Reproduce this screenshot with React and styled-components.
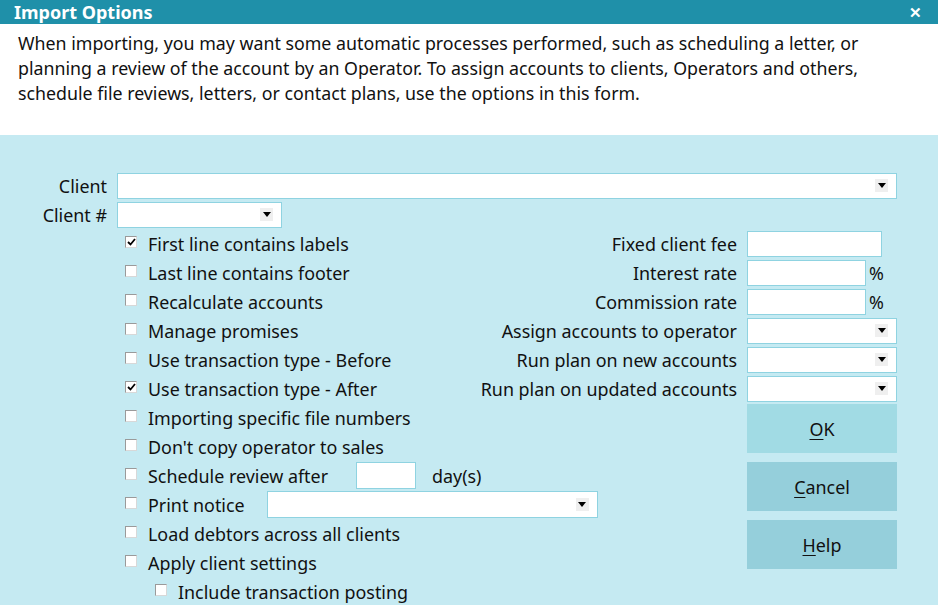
import React from "react";
import styled, { createGlobalStyle } from "styled-components";

const Global = createGlobalStyle`
  html, body { margin: 0; padding: 0; }
  body { background: #c5eaf2; font-family: "Noto Sans", "Open Sans", sans-serif; }
`;

const Window = styled.div`
  width: 938px;
  height: 605px;
  overflow: hidden;
  display: flex;
  flex-direction: column;
  background: #c5eaf2;
  color: #111;
  font-size: 17.9px;
`;

const TitleBar = styled.div`
  height: 24px;
  flex: none;
  background: #1f90a9;
  color: #fff;
  display: flex;
  align-items: center;
  justify-content: space-between;
  padding: 0 14px;
`;

const Title = styled.div`
  font-weight: 700;
  font-size: 18px;
`;

const Close = styled.div`
  font-weight: 700;
  font-size: 15px;
  line-height: 1;
  margin-right: 2px;
`;

const Description = styled.div`
  height: 111px;
  flex: none;
  box-sizing: border-box;
  background: #fff;
  padding: 7px 18px 0;
  font-size: 17.8px;
  line-height: 25px;
  white-space: nowrap;
`;

const Body = styled.div`
  flex: 1;
  padding: 36px 41px 0 0;
  display: flex;
  flex-direction: column;
`;

const ClientGrid = styled.div`
  display: grid;
  grid-template-columns: 107px 1fr;
  grid-auto-rows: 29px;
  column-gap: 10px;
`;

const Label = styled.div`
  display: flex;
  align-items: center;
  justify-content: flex-end;
  white-space: nowrap;
`;

const Select = styled.div`
  box-sizing: border-box;
  height: ${(p) => p.$h || 26}px;
  width: ${(p) => (p.$w ? `${p.$w}px` : "100%")};
  background: #fff;
  border: 1px solid #8fd3e1;
  display: flex;
  align-items: center;
  justify-content: flex-end;
  padding-right: 8px;
  align-self: center;
  flex: none;
`;

const ArrowBox = styled.div`
  width: 13px;
  height: 13px;
  background: #efefef;
  display: flex;
  align-items: center;
  justify-content: center;
`;

const Arrow = () => (
  <ArrowBox>
    <svg width="8" height="5" viewBox="0 0 8 5">
      <path d="M0 0H8L4 5Z" fill="#000" />
    </svg>
  </ArrowBox>
);

const Input = styled.div`
  box-sizing: border-box;
  height: ${(p) => p.$h || 26}px;
  width: ${(p) => p.$w}px;
  background: #fff;
  border: 1px solid #8fd3e1;
  align-self: center;
  flex: none;
`;

const MainGrid = styled.div`
  display: grid;
  grid-template-columns: minmax(0, 1fr) auto 150px;
  grid-auto-rows: 29px;
  column-gap: 10px;
  padding-left: 125px;
`;

const CheckRow = styled.div`
  grid-column: ${(p) => (p.$wide ? "1 / 3" : "1")};
  grid-row: ${(p) => p.$row};
  display: flex;
  align-items: center;
  padding-left: ${(p) => (p.$indent ? 30 : 0)}px;
  white-space: nowrap;
`;

const Box = styled.span`
  box-sizing: border-box;
  width: 12px;
  height: 12px;
  flex: none;
  margin-right: 11px;
  margin-top: -3px;
  background: #fff;
  border: 1px solid #9a9a9a;
  border-right-color: #d8d8d8;
  border-bottom-color: #d8d8d8;
  display: flex;
  align-items: center;
  justify-content: center;
`;

const CheckBox = ({ checked }) => (
  <Box>
    {checked && (
      <svg width="9" height="8" viewBox="0 0 9 8">
        <path d="M1 4L3.5 6.5L8 1" stroke="#000" strokeWidth="1.8" fill="none" />
      </svg>
    )}
  </Box>
);

const Spacer = styled.span`
  width: ${(p) => p.$w}px;
  flex: none;
`;

const RightLabel = styled(Label)`
  grid-column: 2;
  grid-row: ${(p) => p.$row};
`;

const Field = styled.div`
  grid-column: 3;
  grid-row: ${(p) => p.$row};
  display: flex;
  align-items: center;
  gap: 3px;
`;

const Button = styled.div`
  grid-column: 3;
  grid-row: ${(p) => p.$row} / span 2;
  margin-top: 1px;
  height: 49px;
  background: ${(p) => (p.$primary ? "#a1dbe4" : "#95cfdb")};
  display: flex;
  align-items: center;
  justify-content: center;
  u { text-decoration-thickness: 1px; text-underline-offset: 3px; }
`;

const checks = [
  { t: "First line contains labels", c: true },
  { t: "Last line contains footer" },
  { t: "Recalculate accounts" },
  { t: "Manage promises" },
  { t: "Use transaction type - Before" },
  { t: "Use transaction type - After", c: true },
  { t: "Importing specific file numbers" },
  { t: "Don't copy operator to sales" },
];

export default function App() {
  return (
    <>
      <Global />
      <Window>
        <TitleBar>
          <Title>Import Options</Title>
          <Close>✕</Close>
        </TitleBar>
        <Description>
          When importing, you may want some automatic processes performed, such as scheduling a letter, or
          <br />
          planning a review of the account by an Operator. To assign accounts to clients, Operators and others,
          <br />
          schedule file reviews, letters, or contact plans, use the options in this form.
        </Description>
        <Body>
          <ClientGrid>
            <Label>Client</Label>
            <Select>
              <Arrow />
            </Select>
            <Label>Client #</Label>
            <Select $w={165}>
              <Arrow />
            </Select>
          </ClientGrid>
          <MainGrid>
            {checks.map((c, i) => (
              <CheckRow key={c.t} $row={i + 1}>
                <CheckBox checked={c.c} />
                {c.t}
              </CheckRow>
            ))}
            <CheckRow $row={9}>
              <CheckBox />
              Schedule review after
              <Spacer $w={28} />
              <Input $w={60} $h={27} />
              <Spacer $w={16} />
              day(s)
            </CheckRow>
            <CheckRow $row={10} $wide>
              <CheckBox />
              Print notice
              <Spacer $w={22} />
              <Select $w={331} $h={27}>
                <Arrow />
              </Select>
            </CheckRow>
            <CheckRow $row={11}>
              <CheckBox />
              Load debtors across all clients
            </CheckRow>
            <CheckRow $row={12}>
              <CheckBox />
              Apply client settings
            </CheckRow>
            <CheckRow $row={13} $indent>
              <CheckBox />
              Include transaction posting
            </CheckRow>

            <RightLabel $row={1}>Fixed client fee</RightLabel>
            <Field $row={1}>
              <Input $w={135} />
            </Field>
            <RightLabel $row={2}>Interest rate</RightLabel>
            <Field $row={2}>
              <Input $w={119} />%
            </Field>
            <RightLabel $row={3}>Commission rate</RightLabel>
            <Field $row={3}>
              <Input $w={119} />%
            </Field>
            <RightLabel $row={4}>Assign accounts to operator</RightLabel>
            <Field $row={4}>
              <Select>
                <Arrow />
              </Select>
            </Field>
            <RightLabel $row={5}>Run plan on new accounts</RightLabel>
            <Field $row={5}>
              <Select>
                <Arrow />
              </Select>
            </Field>
            <RightLabel $row={6}>Run plan on updated accounts</RightLabel>
            <Field $row={6}>
              <Select>
                <Arrow />
              </Select>
            </Field>
            <Button $row={7} $primary>
              <span><u>O</u>K</span>
            </Button>
            <Button $row={9}>
              <span><u>C</u>ancel</span>
            </Button>
            <Button $row={11}>
              <span><u>H</u>elp</span>
            </Button>
          </MainGrid>
        </Body>
      </Window>
    </>
  );
}
